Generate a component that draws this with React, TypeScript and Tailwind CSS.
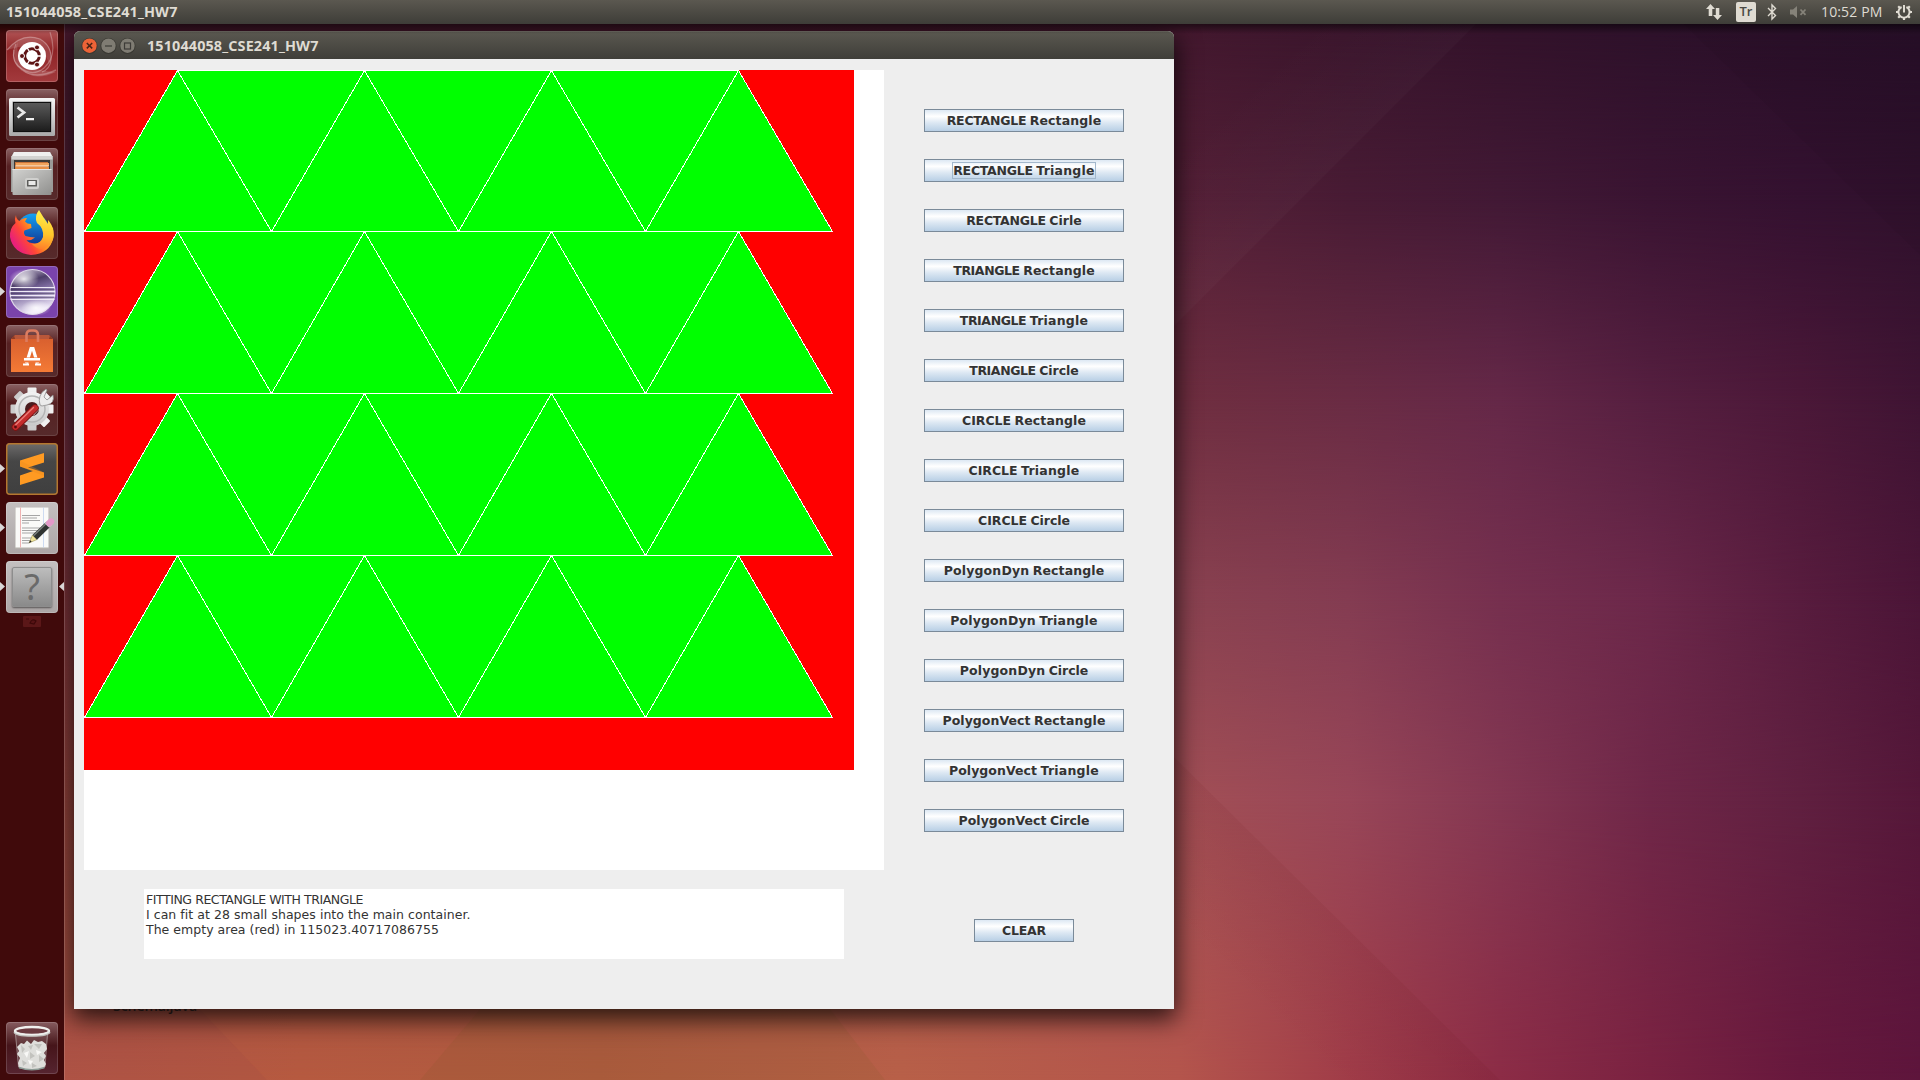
import { useLayoutEffect, useRef, useState, type ReactNode } from 'react';

/* Wallpaper: rows of horizontal gradients, each fading in over the one above it. */
const COLS = [0, 300, 600, 900, 1180, 1350, 1500, 1650, 1800, 1920];
const ROWS: { y: number; c: string[] }[] = [
  { y: 24, c: ['#45172b', '#45172b', '#45172b', '#44172c', '#43182e', '#3a152c', '#33122a', '#2d112a', '#2a1029', '#270f28'] },
  { y: 200, c: ['#4c1c30', '#4e1d31', '#501d33', '#521e34', '#541f36', '#481b34', '#421935', '#3a1432', '#341130', '#2f112c'] },
  { y: 400, c: ['#622637', '#66283a', '#6a2a3c', '#6c2c3e', '#6f2e40', '#6a2c44', '#652848', '#561f40', '#4b1838', '#3f1433'] },
  { y: 600, c: ['#763036', '#7d363e', '#843c46', '#873f4c', '#8a4250', '#843c52', '#76304f', '#6c284a', '#581c3e', '#4b1537'] },
  { y: 800, c: ['#8e3f38', '#94453f', '#9a4a46', '#9e4d4d', '#a24f55', '#984658', '#843752', '#6f2748', '#602040', '#551739'] },
  { y: 1080, c: ['#b15547', '#b65a40', '#b05c3f', '#b86048', '#b4554c', '#a03c48', '#8c2c46', '#7a2241', '#67183d', '#5e153c'] },
];

function Wallpaper() {
  return (
    <div className="absolute inset-0 overflow-hidden">
      {ROWS.map((r, i) => {
        const prev = i ? ROWS[i - 1].y : 0;
        const mask = i ? `linear-gradient(to bottom, transparent ${prev}px, black ${r.y}px)` : 'none';
        return (
          <div
            key={r.y}
            className="absolute inset-0"
            style={{
              backgroundImage: `linear-gradient(to right, ${r.c.map((c, k) => `${c} ${COLS[k]}px`).join(', ')})`,
              maskImage: mask,
              WebkitMaskImage: mask,
            }}
          />
        );
      })}
      <svg className="absolute inset-0" width="1920" height="1080">
        <defs>
          <linearGradient id="ray" gradientUnits="userSpaceOnUse" x1="1325" y1="180" x2="1240" y2="90">
            <stop offset="0" stopColor="#fff" stopOpacity="0.022" />
            <stop offset="1" stopColor="#fff" stopOpacity="0" />
          </linearGradient>
          <linearGradient id="ray2" gradientUnits="userSpaceOnUse" x1="1330" y1="920" x2="1250" y2="1000">
            <stop offset="0" stopColor="#500" stopOpacity="0.06" />
            <stop offset="1" stopColor="#500" stopOpacity="0" />
          </linearGradient>
        </defs>
        <path d="M1480 20 L1100 400 V20Z" fill="url(#ray)" />
        <path d="M1174 757 L1500 1080 H1174Z" fill="url(#ray2)" />
        <path d="M1680 20 L1920 255 V20Z" fill="#000" opacity="0.04" />
        <path d="M191 1000 L267 1080 H64 V1000Z" fill="#7a3050" opacity="0.08" />
        <path d="M488 1000 L420 1080 H885 L823 1000Z" fill="#6a5a20" opacity="0.1" />
      </svg>
    </div>
  );
}

/* A run of text whose letter spacing is adjusted so that it spans `width` pixels. */
function FitText({ text, width }: { text: string; width: number }) {
  const ref = useRef<HTMLSpanElement>(null);
  const [spacing, setSpacing] = useState(0);
  useLayoutEffect(() => {
    if (!ref.current) return;
    const natural = ref.current.getBoundingClientRect().width - spacing * text.length;
    setSpacing((width - natural) / text.length);
  }, [text, width]);
  return (
    <span ref={ref} className="inline-block whitespace-pre" style={{ letterSpacing: `${spacing}px` }}>
      {text}
    </span>
  );
}

function TopBar() {
  return (
    <header className="relative z-30 flex h-6 shrink-0 items-center justify-between bg-linear-to-b from-[#5b5850] to-[#3e3d38] pr-[7px] pl-[6px] text-[#dfdbd2]">
      <span className="font-['Open_Sans',sans-serif] text-[14.4px] leading-6 font-bold whitespace-nowrap">
        <FitText text="151044058_CSE241_HW7" width={171.5} />
      </span>
      <div className="flex items-center">
        <svg width="18" height="18" viewBox="0 0 18 18" fill="#dfdbd2">
          <path d="M5.5 1 L10 6 H7.3 V13 H3.7 V6 H1Z M12.5 17 L8 12 H10.8 V5 H14.3 V12 H17Z" />
        </svg>
        <span className="ml-[13px] flex h-5 w-5 items-center justify-center rounded-[2px] bg-[#dfdbd2] font-['Open_Sans',sans-serif] text-[13px] font-semibold text-[#4a4943]">Tr</span>
        <svg className="ml-[11px]" width="10" height="18" viewBox="0 0 10 18" fill="none" stroke="#dfdbd2" strokeWidth="1.4">
          <path d="M1 5 L8.5 12.5 L5 16 V2 L8.5 5.5 L1 13" />
        </svg>
        <svg className="ml-[12px]" width="19" height="14" viewBox="0 0 19 14">
          <path d="M1 4.5 H4 L8 1 V13 L4 9.5 H1Z" fill="#858279" />
          <path d="M11.5 4.5 L16.5 9.8 M16.5 4.5 L11.5 9.8" stroke="#858279" strokeWidth="1.8" />
        </svg>
        <span className="ml-[13px] w-[61px] font-['Open_Sans',sans-serif] text-[14px] leading-6 whitespace-nowrap">
          <FitText text="10:52 PM" width={61.5} />
        </span>
        <svg className="ml-[13px]" width="18" height="18" viewBox="0 0 18 18" fill="none" stroke="#dfdbd2">
          <path d="M6.6 4 A5.6 5.6 0 1 0 11.4 4" strokeWidth="2" />
          <path d="M9 2 V9.5" strokeWidth="2" />
          <path d="M1 9 H3.5 M14.5 9 H17 M9 14.5 V17 M3.2 3.2 L5 5 M14.8 3.2 L13 5 M3.2 14.8 L5 13 M14.8 14.8 L13 13" strokeWidth="2.2" />
        </svg>
      </div>
    </header>
  );
}

function DashIcon() {
  return (
    <svg width="52" height="52" viewBox="0 0 52 52">
      <g fill="none" stroke="#fff">
        <path d="M1 20 Q16 2 34 9 Q46 16 45 30 Q44 39 36 42" opacity="0.3" strokeWidth="1.2" />
        <path d="M44 2 Q52 26 38 38 Q26 48 12 36 Q4 28 10 14" opacity="0.28" strokeWidth="1.2" />
        <path d="M50 40 Q30 50 16 40 Q6 32 8 20" opacity="0.25" strokeWidth="1.5" />
      </g>
      <path d="M1 20 Q16 2 34 9 Q50 18 43 34 Q36 8 1 20Z" fill="#fff" opacity="0.13" />
      <path d="M50 42 Q24 54 11 34 Q6 22 12 12 Q6 40 50 42Z" fill="#fff" opacity="0.15" />
      <circle cx="26" cy="26" r="14" fill="#fff" />
      <circle cx="26" cy="26" r="7.3" fill="none" stroke="#5e1415" strokeWidth="3" />
      <path d="M26 26 L36 26 M26 26 L21 17.5 M26 26 L21 34.5" stroke="#fff" strokeWidth="1.3" />
      <circle cx="26" cy="26" r="5.4" fill="#fff" />
      <g fill="#5e1415" stroke="#fff" strokeWidth="1">
        <circle cx="16" cy="26" r="2.5" />
        <circle cx="31" cy="17.4" r="2.5" />
        <circle cx="31" cy="34.6" r="2.5" />
      </g>
    </svg>
  );
}

function TerminalIcon() {
  return (
    <svg width="52" height="52" viewBox="0 0 52 52">
      <defs>
        <linearGradient id="tf" x1="0" y1="0" x2="0" y2="1"><stop offset="0" stopColor="#f6f6f6" /><stop offset="1" stopColor="#a9a9a9" /></linearGradient>
        <linearGradient id="ts" x1="0" y1="0" x2="0" y2="1"><stop offset="0" stopColor="#5a5a5a" /><stop offset="1" stopColor="#1d1d1d" /></linearGradient>
      </defs>
      <rect x="3" y="9" width="46" height="38" rx="1.5" fill="url(#tf)" />
      <rect x="6.5" y="12.5" width="39" height="31" fill="#8d8d8d" />
      <rect x="7" y="13" width="38" height="30" fill="#0f0f0f" />
      <rect x="8" y="14" width="36" height="28" fill="url(#ts)" />
      <path d="M11.5 18.5 L18 23.5 L11.5 28.5" fill="none" stroke="#e8e8e8" strokeWidth="2.8" />
      <path d="M20 30.2 H28" stroke="#f2f2f2" strokeWidth="2.2" />
    </svg>
  );
}

function FilesIcon() {
  return (
    <svg width="52" height="52" viewBox="0 0 52 52">
      <defs>
        <linearGradient id="ff" x1="0" y1="0" x2="1" y2="1"><stop offset="0" stopColor="#d2d2d0" /><stop offset="0.45" stopColor="#b5b5b3" /><stop offset="1" stopColor="#8f8f8d" /></linearGradient>
      </defs>
      <path d="M5 9 L8 4 H44 L47 9 V44 H5Z" fill="#9b9b99" />
      <path d="M5.5 9 L8 4 H44 L46.5 9Z" fill="#f0f0ef" />
      <rect x="5.5" y="8" width="41" height="3.5" fill="#d3d3d1" />
      <rect x="8" y="12" width="36" height="10" fill="#3b3a38" />
      <rect x="9" y="14" width="33" height="8" fill="#c9743a" />
      <rect x="10" y="15" width="33" height="3" fill="#f0a35c" />
      <path d="M9.500 18 H43" stroke="#fdf0dc" strokeWidth="1.2" />
      <rect x="9.500" y="18.8" width="33.5" height="3" fill="#e88f45" />
      <path d="M6.5 21 H45.5 V46 Q45.5 47 44.5 47 H7.5 Q6.5 47 6.5 46Z" fill="url(#ff)" />
      <path d="M6.5 21.5 H45.5" stroke="#e4e4e2" strokeWidth="1" />
      <rect x="19" y="30" width="14" height="11" rx="2" fill="#d0d0ce" />
      <rect x="21" y="32" width="10" height="6.5" rx="0.5" fill="#5c5c5a" />
      <rect x="22.5" y="33" width="7" height="4" fill="#e9e9e8" />
    </svg>
  );
}

function FirefoxIcon() {
  return (
    <svg width="52" height="52" viewBox="0 0 52 52">
      <defs>
        <linearGradient id="fx" x1="0.9" y1="0.2" x2="0.1" y2="0.7"><stop offset="0" stopColor="#ffd83a" /><stop offset="0.4" stopColor="#ff9a1e" /><stop offset="0.7" stopColor="#ff4638" /><stop offset="1" stopColor="#e8207a" /></linearGradient>
        <linearGradient id="fb" x1="0.5" y1="0" x2="0.5" y2="1"><stop offset="0" stopColor="#12a2f4" /><stop offset="1" stopColor="#123390" /></linearGradient>
        <linearGradient id="fy" x1="0.5" y1="0" x2="0.4" y2="1"><stop offset="0" stopColor="#fff04c" /><stop offset="0.6" stopColor="#ffc52a" /><stop offset="1" stopColor="#ff7d2a" /></linearGradient>
      </defs>
      <circle cx="27" cy="22.5" r="16" fill="url(#fb)" />
      <path d="M10 8 Q8 12 9.5 16 Q3.500 21 4 30 Q7 46 25 48 Q44 47 47.500 30 L47 20 Q44 26 40 28 Q37 36 29 36.500 Q22 36 20.500 33 Q25 34 29 30.500 Q24 30 19.500 29 Q17 26 18.500 23.500 Q22 22 25.500 21 L25 17 Q21 17 19 14.500 L21 11 Q16 11 13.500 14 Q10 12 10 8Z" fill="url(#fx)" />
      <path d="M33 3 Q28 9 31 16 Q38 21 37 30 Q34 38 26 37 Q34 46 43 39 Q49 32 47.500 24 Q46 17 42 13 L42 17 Q37 10 33 3Z" fill="url(#fy)" />
    </svg>
  );
}

function EclipseIcon() {
  return (
    <svg width="52" height="52" viewBox="0 0 52 52">
      <defs>
        <linearGradient id="ec" x1="0" y1="0" x2="0.3" y2="1"><stop offset="0" stopColor="#e9e3f0" /><stop offset="0.35" stopColor="#4d3e69" /><stop offset="0.55" stopColor="#7a689c" /><stop offset="1" stopColor="#ece5f8" /></linearGradient>
        <radialGradient id="eg"><stop offset="0" stopColor="#fff" stopOpacity="0.85" /><stop offset="1" stopColor="#fff" stopOpacity="0" /></radialGradient>
      </defs>
      <circle cx="26.5" cy="26" r="22.5" fill="url(#ec)" stroke="#dcd5e6" strokeWidth="1.2" />
      <ellipse cx="18" cy="13" rx="15" ry="10" fill="url(#eg)" />
      <ellipse cx="30" cy="42" rx="15" ry="8" fill="url(#eg)" />
      <path d="M4.500 21.500 H48.500 M4 25.500 H49 M4 29.500 H49 M4.500 33.500 H48.500" stroke="#efeaf6" strokeWidth="1.2" />
      <path d="M4.500 23.500 H48.500 M4.500 27.500 H48.500 M4.500 31.500 H48.500" stroke="#3e3358" strokeWidth="1.2" opacity="0.5" />
    </svg>
  );
}

function SoftwareIcon() {
  return (
    <svg width="52" height="52" viewBox="0 0 52 52">
      <defs><linearGradient id="sw" x1="0" y1="0" x2="0" y2="1"><stop offset="0" stopColor="#d9602f" /><stop offset="1" stopColor="#f47a35" /></linearGradient></defs>
      <path d="M5 14 L9 10 H43 L47 14Z" fill="#b9573a" />
      <path d="M5 14 L8 10.5 L10 17Z M47 14 L44 10.5 L42 17Z" fill="#8d3b25" />
      <rect x="5" y="14" width="42" height="33" fill="url(#sw)" />
      <path d="M20.5 17 V10 Q20.5 5.5 25 5.5 H27.5 Q32 5.5 32 10 V17" fill="none" stroke="#dc7c60" strokeWidth="2.6" />
      <g fill="none" stroke="#fff">
        <path d="M20.5 38.5 L25 23.5 H27 L31.5 38.5" strokeWidth="3.2" />
        <path d="M17.5 35 H34.5" stroke="#f0763a" strokeWidth="5" />
        <path d="M18 34.3 H34" strokeWidth="2.5" />
        <path d="M17 39.5 H23 M29 39.5 H35" strokeWidth="2.2" />
      </g>
    </svg>
  );
}

function SettingsIcon() {
  return (
    <svg width="52" height="52" viewBox="0 0 52 52">
      <defs><linearGradient id="sg" x1="0" y1="0" x2="0" y2="1"><stop offset="0" stopColor="#f2f2f2" /><stop offset="1" stopColor="#c9c9c9" /></linearGradient></defs>
      <g fill="url(#sg)">
        {[0, 45, 90, 135].map((a) => (
          <rect key={a} x="21.5" y="3.5" width="9" height="43" rx="1" transform={`rotate(${a} 26 25)`} />
        ))}
        <circle cx="26" cy="25" r="17" />
      </g>
      <circle cx="26" cy="25" r="13" fill="none" stroke="#b5b5b5" strokeWidth="1.5" />
      <circle cx="26" cy="25" r="7" fill="#4a1c1e" />
      <path d="M26 30 L37 18" stroke="#d8d8d8" strokeWidth="4.5" />
      <path d="M34 21 Q31 11 40 5 L41 6 L38 13 L41 16 L47 11 Q49 19 41 21 Q38 21.5 36 22Z" fill="#ececec" stroke="#8f8f8f" strokeWidth="0.8" />
      <path d="M9.500 43 L29 24" stroke="#7c1313" strokeWidth="7.5" strokeLinecap="round" />
      <path d="M9.500 43 L29 24" stroke="#c42c2c" strokeWidth="5.8" strokeLinecap="round" />
      <path d="M9.500 41 L27.500 23.500" stroke="#ea7b76" strokeWidth="1.4" strokeLinecap="round" />
      <circle cx="9.500" cy="43" r="1.4" fill="#5a0d0d" />
    </svg>
  );
}

function SublimeIcon() {
  return (
    <svg width="52" height="52" viewBox="0 0 52 52">
      <path d="M38 10 V19.5 L22 24.5 L38 29.5 V34.5 L14 42 V32.5 L27 28 L14 23.5 V17.5Z" fill="#ff9a22" />
      <path d="M14 17.5 L38 29.5 V33 L14 23.5Z" fill="#e98a1d" opacity="0.35" />
    </svg>
  );
}

function GeditIcon() {
  return (
    <svg width="52" height="52" viewBox="0 0 52 52">
      <rect x="9" y="5.5" width="34" height="41.5" fill="#b4b0ab" />
      <rect x="9.500" y="5.5" width="33" height="40" fill="#fafaf8" />
      <path d="M14.5 5.5 V45.5" stroke="#eda9a9" strokeWidth="0.9" />
      <path d="M37.5 5.5 V45.5" stroke="#b9cdee" strokeWidth="0.7" />
      <path d="M16 13.5 H34 M16 16 H31 M16 18.5 H34 M16 21 H23 M16 26 H34 M16 28.5 H32 M16 31 H29 M16 36 H27 M16 38.5 H25 M16 41 H23" stroke="#a5a5a5" strokeWidth="1" />
      <path d="M23 41 L26.500 33 L31 37.500Z" fill="#efe39a" stroke="#8a803a" strokeWidth="0.5" />
      <path d="M23 41 L24.2 38.3 L25.7 39.8Z" fill="#222" />
      <path d="M28.7 35.3 L42 22.5" stroke="#2f3331" strokeWidth="6.5" />
      <path d="M27.5 33.8 L40.5 21.3" stroke="#7b807d" strokeWidth="1.3" />
      <path d="M41 23.5 L43.5 21" stroke="#c9ccca" strokeWidth="6.5" />
      <path d="M43.3 21.2 L45 19.6" stroke="#e49ac9" strokeWidth="6.5" strokeLinecap="round" />
    </svg>
  );
}

function UnknownIcon() {
  return (
    <div className="flex h-10 w-10 items-center justify-center rounded-[2px] border border-[#8d8d8d] bg-linear-to-b from-[#bdbdbd] to-[#8a8a8a] font-['Noto_Sans',sans-serif] text-[36px] leading-none text-[#6a6a6a] shadow-[0_1px_2px_rgba(0,0,0,0.5)]">
      ?
    </div>
  );
}

function TrashIcon() {
  return (
    <svg width="52" height="52" viewBox="0 0 52 52">
      <path d="M9 11 L12.5 46 Q26 50 38.500 46 L42 11Z" fill="#fff" opacity="0.12" />
      <path d="M9.500 12 L12.500 45 M41.500 12 L39 45" stroke="#cfcac8" strokeWidth="1" opacity="0.5" />
      <path d="M11 25 L15 21 L18 22 L21 18.500 L25 22 L28 18 L32 20 L36 19 L40 22 L41 27 L38 31 L40 34 L38 38 L40 42 L38 46 Q26 49.500 13 46 L12 41 L14 36 L11 32 L13 29Z" fill="#dededb" />
      <path d="M15 23 L19 27 L16 31Z M28 22 L33 27 L36 22Z M24 30 L29 34 L24 37Z M33 33 L38 37 L33 40Z M16 38 L21 41 L17 44Z M26 41 L31 44 L26 46Z M22 24 L25 28 L27 23Z" fill="#c2c2be" />
      <path d="M18 31 L23 29 L21 36Z M30 28 L36 30 L31 33Z M22 38 L27 39 L24 43Z" fill="#f8f8f6" />
      <path d="M13 45.5 Q26 50 38.5 45.5" fill="none" stroke="#8b9a94" strokeWidth="1.5" />
      <ellipse cx="26" cy="9" rx="17" ry="4" fill="#6b3a40" stroke="#f0f0ee" strokeWidth="2.4" />
      <path d="M8.5 10 Q10 13.5 26 13.5 Q42 13.5 43.5 10" fill="none" stroke="#c2c2be" strokeWidth="2.4" />
      <path d="M8.5 9.500 Q12 12.800 26 12.800 Q40 12.800 43.500 9.500" fill="none" stroke="#efefed" strokeWidth="1.5" />
    </svg>
  );
}

function Tile({ bg, children, running, active }: { bg: string; children: ReactNode; running?: boolean; active?: boolean }) {
  return (
    <div className="relative flex w-16 shrink-0 justify-center">
      <div className={`flex h-[52px] w-[52px] items-center justify-center overflow-hidden rounded-[4px] ${bg}`}>{children}</div>
      {running && (
        <svg className="absolute top-[21px] left-0" width="5" height="9" viewBox="0 0 5 9"><path d="M0 0 L5 4.5 L0 9Z" fill="#d9d6d6" /></svg>
      )}
      {active && (
        <svg className="absolute top-[21px] right-0" width="5" height="9" viewBox="0 0 5 9"><path d="M5 0 L0 4.5 L5 9Z" fill="#d9d6d6" /></svg>
      )}
    </div>
  );
}

const GLASS = 'bg-linear-to-b from-[#8a6264] via-[#562022] via-35% to-[#562a2b] shadow-[inset_0_0_0_1px_rgba(255,255,255,0.12)]';
const SILVER = 'bg-linear-to-b from-[#c4c0c0] to-[#aca6a6] shadow-[inset_0_0_0_1px_rgba(255,255,255,0.2)]';

function Launcher() {
  return (
    <aside className="relative z-20 flex w-[65px] shrink-0 flex-col gap-[7px] border-r border-white/15 bg-[#400a0b] bg-clip-padding pt-1.5 pb-1.5">
      <Tile bg="bg-linear-to-b from-[#b25557] via-[#8f2326] via-40% to-[#a33a3d] shadow-[inset_0_0_0_1px_rgba(255,255,255,0.2)]"><DashIcon /></Tile>
      <Tile bg={GLASS}><TerminalIcon /></Tile>
      <Tile bg={GLASS}><FilesIcon /></Tile>
      <Tile bg={GLASS}><FirefoxIcon /></Tile>
      <Tile bg="bg-[#7a43ab] shadow-[inset_0_0_0_1px_rgba(255,255,255,0.2)]" running><EclipseIcon /></Tile>
      <Tile bg={GLASS}><SoftwareIcon /></Tile>
      <Tile bg={GLASS}><SettingsIcon /></Tile>
      <Tile bg="bg-linear-to-b from-[#6e6c6c] via-[#464646] via-35% to-[#3f3f3f] shadow-[inset_0_0_0_1.5px_#b5772f]" running><SublimeIcon /></Tile>
      <Tile bg={SILVER} running><GeditIcon /></Tile>
      <Tile bg={SILVER} running active><UnknownIcon /></Tile>
      <svg className="-mt-[5px] ml-[23px] opacity-60" width="18" height="14" viewBox="0 0 18 14">
        <rect x="0" y="1" width="18" height="11" rx="1" fill="#6e2022" />
        <path d="M3 4 H6 M7 8 Q9 3 13 6 L11 9Z" stroke="#3a0809" strokeWidth="1.2" fill="#661a1c" />
      </svg>
      <div className="mt-auto">
        <Tile bg="bg-linear-to-b from-[#865c60] via-[#46151a] via-45% to-[#562430] shadow-[inset_0_0_0_1px_rgba(255,255,255,0.15)]"><TrashIcon /></Tile>
      </div>
    </aside>
  );
}

/* Equilateral triangle packing inside a 770x700 container. */
const SIDE = 187;
const HALF = 93;
const HEIGHT = (SIDE * Math.sqrt(3)) / 2;

function Packing() {
  const shapes: string[] = [];
  for (let r = 0; r < 4; r++) {
    const t = Math.floor(r * HEIGHT);
    const b = Math.floor((r + 1) * HEIGHT);
    for (let i = 0; i < 4; i++) {
      const x = i * SIDE;
      shapes.push(`${x},${b} ${x + HALF},${t} ${x + SIDE},${b}`);
      if (i < 3) shapes.push(`${x + HALF},${t} ${x + SIDE + HALF},${t} ${x + SIDE},${b}`);
    }
  }
  return (
    <svg className="block" width="770" height="700" shapeRendering="crispEdges">
      <rect width="770" height="700" fill="#ff0000" />
      <g transform="translate(0.5 0.5)" fill="#00ff00" stroke="#ffffff" strokeWidth="1">
        {shapes.map((p) => (
          <polygon key={p} points={p} />
        ))}
      </g>
    </svg>
  );
}

const WORD_WIDTHS: Record<string, number> = {
  RECTANGLE: 79.5,
  TRIANGLE: 66.5,
  CIRCLE: 49,
  CLEAR: 44,
  Rectangle: 71.5,
  Triangle: 58.5,
  Circle: 39.5,
  Cirle: 32.5,
  PolygonDyn: 85.5,
  PolygonVect: 88,
};

const BUTTONS = [
  'RECTANGLE Rectangle',
  'RECTANGLE Triangle',
  'RECTANGLE Cirle',
  'TRIANGLE Rectangle',
  'TRIANGLE Triangle',
  'TRIANGLE Circle',
  'CIRCLE Rectangle',
  'CIRCLE Triangle',
  'CIRCLE Circle',
  'PolygonDyn Rectangle',
  'PolygonDyn Triangle',
  'PolygonDyn Circle',
  'PolygonVect Rectangle',
  'PolygonVect Triangle',
  'PolygonVect Circle',
];

function SwingButton({ label, width, focused }: { label: string; width: string; focused?: boolean }) {
  return (
    <button
      className={`flex h-[23px] shrink-0 items-center justify-center border border-[#7a8a99] bg-[linear-gradient(to_bottom,#dde8f3_0%,#ffffff_30%,#dde8f3_60%,#b8cfe5_100%)] font-['DejaVu_Sans',sans-serif] text-[12.5px] leading-[15px] font-bold whitespace-nowrap text-[#333333] ${width}`}
    >
      <span className={`flex gap-[3.5px] ${focused ? 'outline outline-[#a3b8cc]' : ''}`}>
        {label.split(' ').map((w) => (
          <FitText key={w} text={w} width={WORD_WIDTHS[w]} />
        ))}
      </span>
    </button>
  );
}

function AppWindow() {
  return (
    <section className="absolute top-[7px] left-[9px] z-10 flex h-[978px] w-[1100px] flex-col rounded-t-[6px] bg-[#eeeeee] shadow-[0_8px_24px_2px_rgba(0,0,0,0.75)]">
      <div className="flex h-7 shrink-0 items-center rounded-t-[6px] border-t border-[#6b6961] bg-linear-to-b from-[#5a5850] to-[#3f3e39] pl-[7px]">
        <svg width="56" height="18" viewBox="0 0 56 18">
          <circle cx="8.500" cy="9" r="8" fill="#393832" />
          <circle cx="8.500" cy="8.7" r="7.2" fill="#ec6337" />
          <path d="M5.8 6 L11.2 11.4 M11.2 6 L5.8 11.4" stroke="#4b2416" strokeWidth="1.5" />
          <circle cx="27.500" cy="9" r="8" fill="#393832" />
          <circle cx="27.500" cy="8.7" r="7.2" fill="#7f7c73" />
          <path d="M24 9 H31" stroke="#3c3b37" strokeWidth="1.2" />
          <circle cx="46.500" cy="9" r="8" fill="#393832" />
          <circle cx="46.500" cy="8.7" r="7.2" fill="#7f7c73" />
          <rect x="43.500" y="6" width="6" height="6" fill="none" stroke="#3c3b37" strokeWidth="1.2" />
        </svg>
        <span className="ml-[10px] font-['Open_Sans',sans-serif] text-[14.4px] font-bold whitespace-nowrap text-[#dfdbd2]">
          <FitText text="151044058_CSE241_HW7" width={171.5} />
        </span>
      </div>
      <div className="flex flex-1 pt-[11px] pl-[10px]">
        <div className="flex w-[800px] flex-col">
          <div className="h-[800px] bg-white"><Packing /></div>
          <div className="mt-[19px] ml-[60px] flex h-[70px] w-[700px] flex-col items-start bg-white pt-[3px] pl-[2px] font-['DejaVu_Sans',sans-serif] text-[12.5px] leading-[15px] whitespace-nowrap text-[#333333]">
            <FitText text="FITTING RECTANGLE WITH TRIANGLE" width={217} />
            <FitText text="I can fit at 28 small shapes into the main container." width={324.5} />
            <FitText text="The empty area (red) in 115023.40717086755" width={293} />
          </div>
        </div>
        <div className="ml-10 flex w-[200px] flex-col items-center pt-[39px]">
          <div className="flex flex-col gap-[27px]">
            {BUTTONS.map((label) => (
              <SwingButton key={label} label={label} width="w-[200px]" focused={label === 'RECTANGLE Triangle'} />
            ))}
          </div>
          <div className="mt-[87px]"><SwingButton label="CLEAR" width="w-[100px]" /></div>
        </div>
      </div>
    </section>
  );
}

export default function App() {
  return (
    <div className="relative flex h-[1080px] w-[1920px] flex-col overflow-hidden bg-[#3a142c]">
      <Wallpaper />
      <TopBar />
      <div className="relative flex min-h-0 flex-1">
        <Launcher />
        <main className="relative flex-1">
          <AppWindow />
          <div className="absolute top-[985px] left-[48px] z-20 h-[6px] overflow-hidden">
            <div className="-mt-[11px] font-['Open_Sans',sans-serif] text-[14px] leading-[16px] font-semibold text-[#17100f]">
              <FitText text="Schema.java" width={84} />
            </div>
          </div>
        </main>
        <div className="absolute inset-x-0 top-0 z-20 h-2.5 bg-linear-to-b from-black/50 to-transparent" />
      </div>
    </div>
  );
}
